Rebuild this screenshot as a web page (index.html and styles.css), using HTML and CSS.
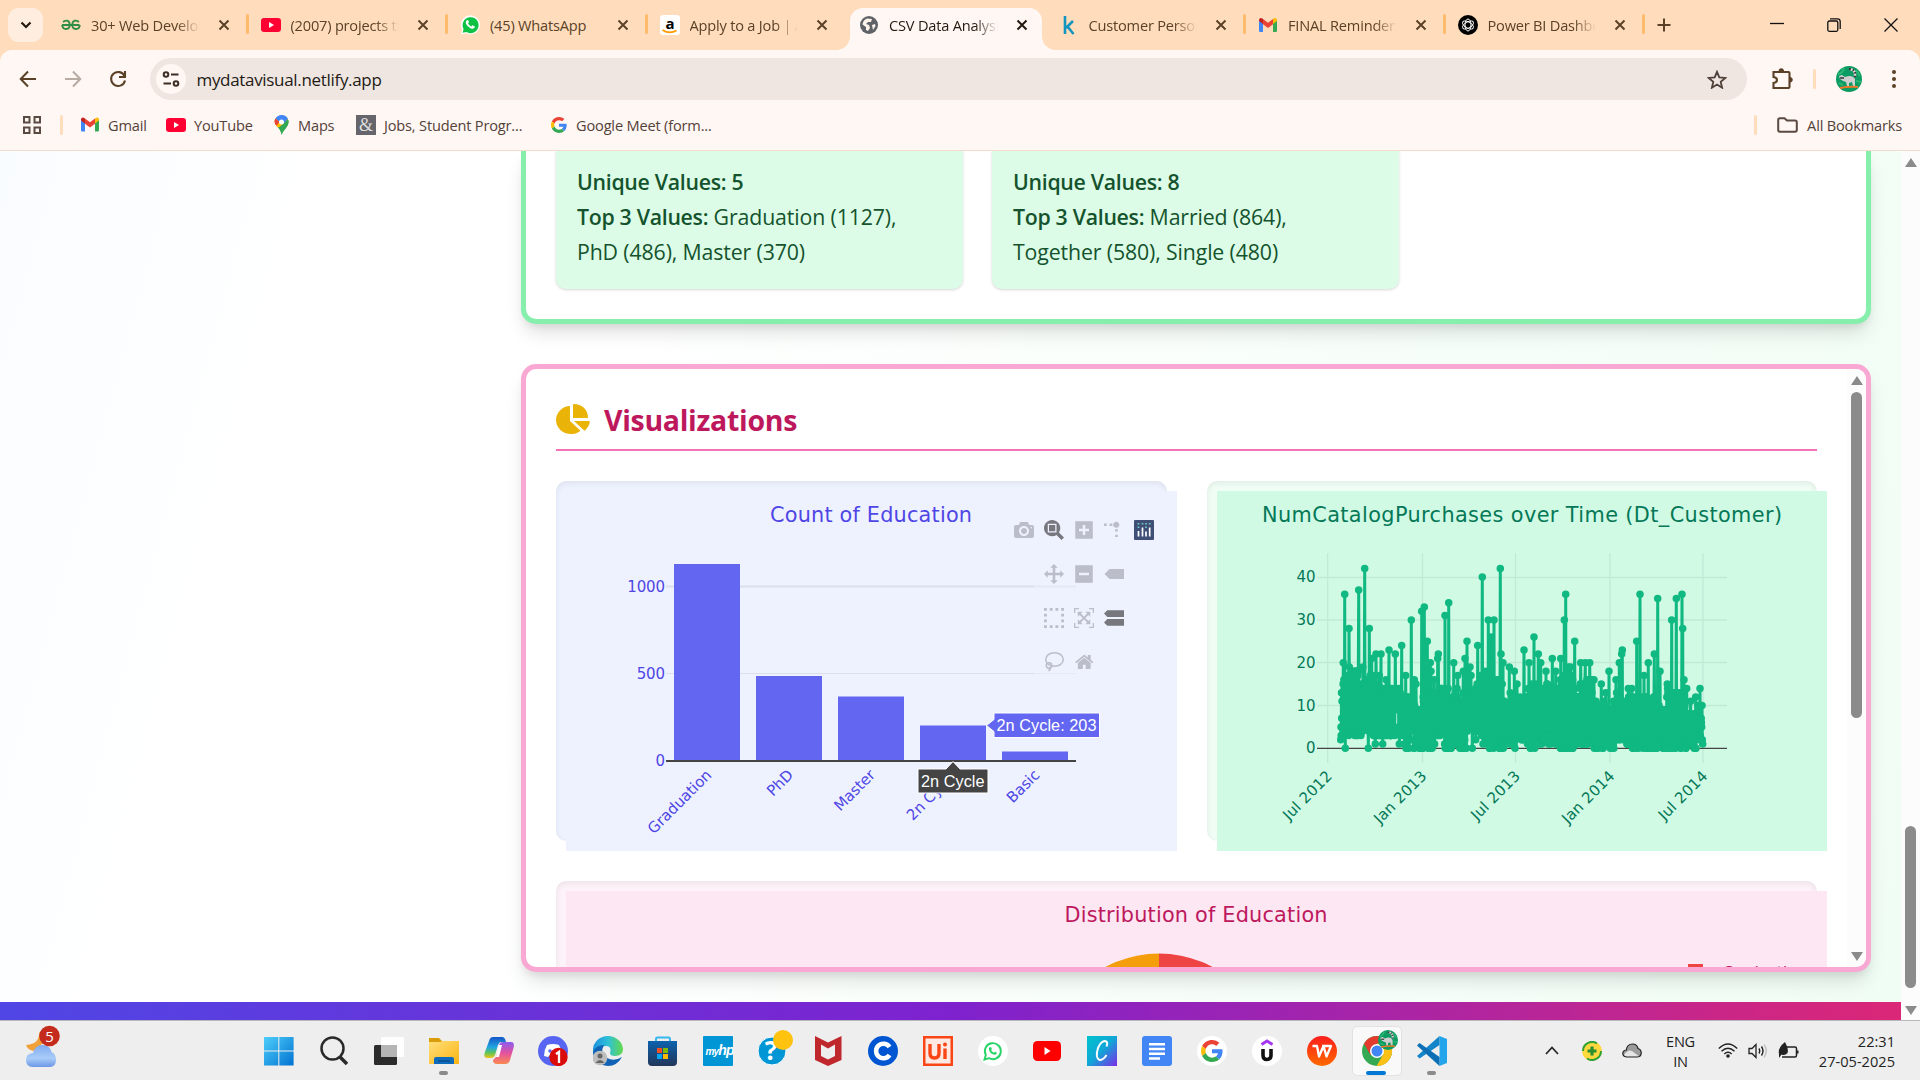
FILE: index.html
```html
<!DOCTYPE html>
<html lang="en">
<head>
<meta charset="utf-8">
<title>CSV Data Analysis</title>
<link rel="stylesheet" href="styles.css">
</head>
<body>
<svg class="defs" width="0" height="0">
  <defs>
    <linearGradient id="winG" x1="0" y1="0" x2="30" y2="30" gradientUnits="userSpaceOnUse"><stop offset="0" stop-color="#4fd0fb"/><stop offset="1" stop-color="#0070d0"/></linearGradient>
    <linearGradient id="edgeG" x1="0" y1="0" x2="1" y2="0"><stop offset="0" stop-color="#1b8fdc"/><stop offset=".5" stop-color="#2fc0d8"/><stop offset="1" stop-color="#62d94a"/></linearGradient>
    <linearGradient id="copA" x1="0" y1="0" x2="0" y2="1"><stop offset="0" stop-color="#1556c8"/><stop offset=".5" stop-color="#22a7e0"/><stop offset=".75" stop-color="#5cc55a"/><stop offset="1" stop-color="#f2c41a"/></linearGradient>
    <linearGradient id="copB" x1="0" y1="0" x2="0" y2="1"><stop offset="0" stop-color="#8a5cf0"/><stop offset=".5" stop-color="#e3529f"/><stop offset="1" stop-color="#fb8a50"/></linearGradient>
    <linearGradient id="canva" x1="0" y1="0" x2="1" y2="1"><stop offset="0" stop-color="#00c4cc"/><stop offset=".5" stop-color="#12a5d8"/><stop offset="1" stop-color="#7d2ae8"/></linearGradient>
    <linearGradient id="store" x1="0" y1="0" x2="0" y2="1"><stop offset="0" stop-color="#0b62ad"/><stop offset="1" stop-color="#233659"/></linearGradient>
    <linearGradient id="folder" x1="0" y1="0" x2="1" y2="1"><stop offset="0" stop-color="#ffe07a"/><stop offset="1" stop-color="#fcb414"/></linearGradient>
    <linearGradient id="wps" x1="0" y1="0" x2="0" y2="1"><stop offset="0" stop-color="#fb1d1d"/><stop offset="1" stop-color="#ff6a00"/></linearGradient>
    <linearGradient id="cloud" x1="0" y1="0" x2="0" y2="1"><stop offset="0" stop-color="#7faaf0"/><stop offset=".6" stop-color="#a9ccf8"/><stop offset="1" stop-color="#6b97e6"/></linearGradient>
    <symbol id="close" viewBox="0 0 12 12"><path d="M1.5 1.5l9 9M10.5 1.5l-9 9" stroke="currentColor" stroke-width="2" fill="none"/></symbol>
    <symbol id="yt" viewBox="0 0 20 20"><rect y="3" width="20" height="14" rx="3.2" fill="#ff0033"/><path d="M8 7l5 3-5 3z" fill="#fff"/></symbol>
    <symbol id="gmail" viewBox="0 0 20 16"><path d="M1 2v12q0 1 1.2 1H5V6.500L1 3z" fill="#4285f4"/><path d="M19 2v12q0 1-1.200 1H15V6.500L19 3z" fill="#34a853"/><path d="M15 2v5l4-3V2.500Q18-.4 15 2z" fill="#fbbc04"/><path d="M5 2v5L1 4V2.500Q2-.4 5 2z" fill="#c5221f"/><path d="M5 2l5 3.800L15 2v5.200L10 11 5 7.200z" fill="#ea4335"/></symbol>
    <symbol id="google" viewBox="0 0 48 48"><path fill="#ea4335" d="M24 9.500c3.540 0 6.710 1.220 9.210 3.600l6.850-6.850C35.900 2.380 30.470 0 24 0 14.620 0 6.510 5.380 2.560 13.220l7.980 6.190C12.430 13.720 17.740 9.500 24 9.500z"/><path fill="#4285f4" d="M46.980 24.550c0-1.570-.15-3.090-.38-4.550H24v9.020h12.940c-.58 2.960-2.260 5.480-4.780 7.180l7.730 6c4.510-4.180 7.090-10.360 7.090-17.650z"/><path fill="#fbbc05" d="M10.530 28.590c-.48-1.450-.76-2.990-.76-4.590s.27-3.140.76-4.590l-7.980-6.190C.92 16.460 0 20.120 0 24c0 3.880.92 7.540 2.560 10.780l7.970-6.190z"/><path fill="#34a853" d="M24 48c6.480 0 11.930-2.130 15.890-5.810l-7.730-6c-2.150 1.450-4.920 2.300-8.160 2.300-6.260 0-11.570-4.220-13.470-9.910l-7.980 6.190C6.510 42.620 14.620 48 24 48z"/></symbol>
    <symbol id="lemur" viewBox="0 0 26 26"><circle cx="13" cy="13" r="13" fill="#0c9b62"/><path d="M2 8q5-1 6-6M20 4l4 6M3 17l4 2M20 15l5 1" stroke="#2bb673" stroke-width="2" fill="none"/><path d="M13 3q7 0 6 8" fill="none" stroke="#ddd" stroke-width="2.500"/><path d="M13 3q7 0 6 8" fill="none" stroke="#333" stroke-width="2.500" stroke-dasharray="1.500 2"/><path d="M3 10l3-1 3 2q7-3 10 2v7h-2l-1-4-3 1v3h-2l-1-4-3-1-3-2z" fill="#cfcfcf"/><path d="M4 12h4" stroke="#333" stroke-width="1.500"/><path d="M4 22q9-2 18-1" stroke="#e8782a" stroke-width="2" fill="none"/></symbol>
  </defs>
</svg>

<header class="browser">
  <div class="tabstrip">
    <div class="tab-search"><svg width="12" height="8" viewBox="0 0 12 8"><path d="M1.500 1.500L6 6l4.500-4.500" fill="none" stroke="#241a10" stroke-width="2.200"/></svg></div>
    <div class="tabs">
      <div class="tab sep"><svg class="fav" viewBox="0 0 20 20"><g fill="none" stroke="#2f8d46" stroke-width="1.900"><path d="M1 10h17.500M2 6.800Q7.500 4 8.500 8q1 6-3.500 6-3.500 0-3.800-4M18 6.800Q12.500 4 11.500 8q-1 6 3.500 6 3.500 0 3.800-4"/></g></svg><span class="label">30+ Web Develop</span><svg class="x"><use href="#close"/></svg></div>
      <div class="tab sep"><svg class="fav"><use href="#yt"/></svg><span class="label">(2007) projects the</span><svg class="x"><use href="#close"/></svg></div>
      <div class="tab sep"><svg class="fav" viewBox="0 0 20 20"><path d="M1 19.500l1.300-4.700A9.500 9.500 0 1 1 6 18.300z" fill="#fff"/><path d="M2.600 17.800l1-3.700A8 8 0 1 1 6.400 17z" fill="#0cc143"/><path d="M6.800 5.300q1-.8 1.500.2l.7 1.600-.9 1.300q1 2 3.200 3l1.200-1.200 2 1q.7.500 0 1.500-1.300 1.700-3.700.7Q7 11.600 5.800 8.500q-.4-2 1-3.200z" fill="#fff"/></svg><span class="label whole">(45) WhatsApp</span><svg class="x"><use href="#close"/></svg></div>
      <div class="tab"><svg class="fav" viewBox="0 0 20 20"><rect width="20" height="20" rx="3" fill="#fff"/><text x="10" y="13.500" text-anchor="middle" class="amz">a</text><path d="M2.500 15q7 4.500 14 .5" fill="none" stroke="#ff9900" stroke-width="1.600"/></svg><span class="label">Apply to a Job | Am</span><svg class="x"><use href="#close"/></svg></div>
      <div class="tab active"><svg class="fav" viewBox="0 0 20 20"><circle cx="10" cy="10" r="9" fill="#5f6368"/><path d="M8 3.500l5 .5-1 3H9L7 9l3 1 1 3-2 3-2-1v-3L3.500 9.500Q4 5 8 3.500zM13 10l3-1 .500 2-2.500 4z" fill="#fff3ec"/></svg><span class="label">CSV Data Analysis</span><svg class="x"><use href="#close"/></svg></div>
      <div class="tab sep"><svg class="fav" viewBox="0 0 20 20"><path d="M6 1v18M7 13l7-7M8.500 11.500l6 7.500" stroke="#1495bd" stroke-width="2.600" fill="none"/></svg><span class="label">Customer Person</span><svg class="x"><use href="#close"/></svg></div>
      <div class="tab sep"><svg class="fav"><use href="#gmail"/></svg><span class="label">FINAL Reminder:</span><svg class="x"><use href="#close"/></svg></div>
      <div class="tab sep"><svg class="fav" viewBox="0 0 20 20"><circle cx="10" cy="10" r="10" fill="#000"/><g fill="none" stroke="#fff" stroke-width="1"><ellipse cx="10" cy="10" rx="3" ry="6"/><ellipse cx="10" cy="10" rx="3" ry="6" transform="rotate(60 10 10)"/><ellipse cx="10" cy="10" rx="3" ry="6" transform="rotate(120 10 10)"/></g></svg><span class="label">Power BI Dashbo</span><svg class="x"><use href="#close"/></svg></div>
    </div>
    <svg class="newtab" width="14" height="14" viewBox="0 0 14 14"><path d="M7 .5v13M.5 7h13" stroke="#5a4127" stroke-width="2"/></svg>
    <div class="winctl">
      <svg width="14" height="14" viewBox="0 0 14 14"><path d="M0 5.500h14" stroke="#111" stroke-width="1.300"/></svg>
      <svg width="14" height="14" viewBox="0 0 14 14"><g fill="none" stroke="#111" stroke-width="1.300"><rect x=".8" y="3" width="10" height="10.300" rx="1.500"/><path d="M3 .8h7.500q2.700 0 2.700 2.700V11"/></g></svg>
      <svg width="14" height="14" viewBox="0 0 14 14"><path d="M.5.5l13 13M13.500.5l-13 13" stroke="#111" stroke-width="1.300"/></svg>
    </div>
  </div>
  <div class="toolbar">
    <svg class="nav" width="18" height="18" viewBox="0 0 18 18"><path d="M17 9H2M9 1.500L1.700 9 9 16.500" fill="none" stroke="#5a4127" stroke-width="2"/></svg>
    <svg class="nav" width="18" height="18" viewBox="0 0 18 18"><path d="M1 9h15M9 1.500L16.300 9 9 16.500" fill="none" stroke="#b8aba3" stroke-width="2"/></svg>
    <svg class="nav" width="18" height="18" viewBox="0 0 18 18"><path d="M15.500 6A7 7 0 1 0 16 10.500M16 1v6h-6" fill="none" stroke="#5a4127" stroke-width="2.100"/></svg>
    <div class="omnibox">
      <span class="site"><svg width="18" height="16" viewBox="0 0 18 16"><g fill="none" stroke="#3d2e25" stroke-width="2"><circle cx="4" cy="3.500" r="2.300"/><path d="M9 3.500h7.500M1.500 12.500H9"/><circle cx="14" cy="12.500" r="2.300"/></g></svg></span>
      <span class="url">mydatavisual.netlify.app</span>
      <svg class="star" width="20" height="19" viewBox="0 0 20 19"><path d="M10 1.800l2.300 5.600 6 .5-4.600 3.900 1.400 5.900L10 14.500l-5.100 3.200 1.400-5.900L1.700 7.900l6-.5z" fill="none" stroke="#4f4039" stroke-width="1.800"/></svg>
    </div>
    <svg class="ext" width="22" height="22" viewBox="0 0 22 22"><path d="M2.500 4h15q1 0 1 1v14q0 1-1 1h-15v-5q3.500-.5 3.500-3t-3.500-3z" fill="none" stroke="#5a4127" stroke-width="2.100"/><path d="M8 3a2.300 2.300 0 0 1 4.600 0zM19 9.500a2.300 2.300 0 0 1 0 4.600z" fill="#5a4127" stroke="#5a4127"/></svg>
    <i class="vsep"></i>
    <svg class="avatar"><use href="#lemur"/></svg>
    <svg width="6" height="20" viewBox="0 0 6 20"><g fill="#5a4127"><circle cx="3" cy="3" r="2"/><circle cx="3" cy="10" r="2"/><circle cx="3" cy="17" r="2"/></g></svg>
  </div>
  <div class="bookmarks">
    <svg class="apps" width="18" height="18" viewBox="0 0 18 18"><g fill="none" stroke="#5b4a42" stroke-width="2"><rect x="1" y="1" width="5.500" height="5.500"/><rect x="11.500" y="1" width="5.500" height="5.500"/><rect x="1" y="11.500" width="5.500" height="5.500"/><rect x="11.500" y="11.500" width="5.500" height="5.500"/></g></svg>
    <i class="vsep"></i>
    <a class="bm b1"><svg class="gm"><use href="#gmail"/></svg>Gmail</a>
    <a class="bm b2"><svg class="ic"><use href="#yt"/></svg>YouTube</a>
    <a class="bm b3"><svg width="15" height="20" viewBox="0 0 15 20"><path d="M7.500 20Q7 15 3 11.500l7-8 4.500 2Q15.500 9 12 13t-4.500 7z" fill="#34a853"/><path d="M3 11.500Q-.5 7 1.500 3.500L6.500 7z" fill="#fbbc04"/><path d="M1.500 3.500L7 8l5-6.500Q14 3 14.500 6L9 12l-5.500.2Q-.5 8 1.500 3.500z" fill="#fbbc04"/><path d="M1.400 3.600Q4-.5 8.500.1q4 .5 5.500 4L9.500 9 5.500 7z" fill="#4285f4"/><path d="M1.400 3.600L5.500 7 2.500 10.800Q-1 7 1.400 3.600z" fill="#ea4335"/><path d="M14 4.200Q15.500 9 11.500 13.500T7.500 20Q7 15 4.500 13z" fill="#34a853"/><circle cx="7.500" cy="7" r="2.500" fill="#fff"/></svg>Maps</a>
    <a class="bm b4"><svg class="ic" viewBox="0 0 20 20"><rect width="20" height="20" fill="#65656b"/><text x="10" y="16" text-anchor="middle" class="amp">&amp;</text></svg>Jobs, Student Progr...</a>
    <a class="bm b5"><svg width="16" height="16"><use href="#google"/></svg>Google Meet (form...</a>
    <span class="right"><i class="vsep"></i><svg width="21" height="16" viewBox="0 0 21 16"><path d="M1.200 13V3q0-1.800 1.800-1.800h4.500L10 3.500h8q1.800 0 1.800 1.800V13q0 1.800-1.800 1.800H3Q1.200 14.800 1.200 13z" fill="none" stroke="#5b4a42" stroke-width="2"/></svg><span>All Bookmarks</span></span>
  </div>
</header>

<main class="viewport">
  <div class="page">
    <div class="content">
      <section class="card green">
        <div class="stat"><b>Unique Values: 5</b><br><b>Top 3 Values:</b> Graduation (1127),<br>PhD (486), Master (370)</div>
        <div class="stat"><b>Unique Values: 8</b><br><b>Top 3 Values:</b> Married (864),<br>Together (580), Single (480)</div>
      </section>
      <section class="card pink">
        <div class="scrollarea">
          <h2><svg width="34" height="30" viewBox="32 0 544 512" preserveAspectRatio="none"><path fill="#eab308" d="M304 240V16.600c0-9 7-16.600 16-16.600C443.700 0 544 100.300 544 224c0 9-7.600 16-16.600 16H304zM32 272C32 150.700 122.100 50.300 239 34.300c9.200-1.300 17 6.100 17 15.400V288L412.500 444.500c6.700 6.700 6.200 17.700-1.500 23.100C371.800 495.600 323.800 512 272 512C139.500 512 32 404.600 32 272zm526.400 16c9.300 0 16.600 7.800 15.400 17c-7.700 55.900-34.600 105.600-73.900 142.300c-6 5.600-15.400 5.200-21.200-.7L320 288H558.400z"/></svg><span>Visualizations</span></h2>
          <div class="grid">
            <div class="box indigo">
              <svg class="plot" width="611" height="360" viewBox="566 491 611 360">
                <rect x="566" y="491" width="611" height="360" fill="#eef2ff"/>
                <path d="M666 586.500h410" stroke="#dcdfeb" stroke-width="2"/>
                <path d="M666 673.500h410" stroke="#dcdfeb" stroke-width="1.200"/>
                <g fill="#6366f1"><rect x="674" y="564" width="66" height="197"/><rect x="756" y="676" width="66" height="85"/><rect x="838" y="696.500" width="66" height="64.500"/><rect x="920" y="725.500" width="66" height="35.500"/><rect x="1002" y="751.500" width="66" height="9.500"/></g>
                <path d="M666 761h410" stroke="#444" stroke-width="2"/>
                <text x="770" y="521.500" class="ttl" textLength="202" fill="#4f46e5">Count of Education</text>
                <g class="tick" fill="#4f46e5" text-anchor="end">
                  <text x="665" y="591.500">1000</text><text x="665" y="679">500</text><text x="665" y="766">0</text>
                  <text transform="translate(712.500 776) rotate(-45)">Graduation</text><text transform="translate(794 776) rotate(-45)">PhD</text><text transform="translate(876 776) rotate(-45)">Master</text><text transform="translate(958 776) rotate(-45)">2n Cycle</text><text transform="translate(1040.500 776) rotate(-45)">Basic</text>
                </g>
                <rect x="1034" y="552" width="124" height="130" fill="#eef2ff" opacity=".5"/>
                <g fill="#bbbdc8">
                  <svg x="1014" y="520" width="20" height="20" viewBox="0 0 1000 1000"><path transform="matrix(1 0 0 -1 0 850)" d="m500 450c-83 0-150-67-150-150 0-83 67-150 150-150 83 0 150 67 150 150 0 83-67 150-150 150z m400 150h-120c-16 0-34 13-39 29l-31 93c-6 15-23 28-40 28h-340c-16 0-34-13-39-28l-31-94c-6-15-23-28-40-28h-120c-55 0-100-45-100-100v-450c0-55 45-100 100-100h800c55 0 100 45 100 100v450c0 55-45 100-100 100z m-400-550c-138 0-250 112-250 250 0 138 112 250 250 250 138 0 250-112 250-250 0-138-112-250-250-250z m365 380c-19 0-35 16-35 35 0 19 16 35 35 35 19 0 35-16 35-35 0-19-16-35-35-35z"/></svg>
                  <svg x="1044" y="520" width="20" height="20" viewBox="0 0 1000 1000" fill="#76787d"><path transform="matrix(1 0 0 -1 0 850)" d="m1000-25l-250 251c40 63 63 138 63 218 0 224-182 406-407 406-224 0-406-182-406-406s183-406 407-406c80 0 155 22 218 62l250-250 125 125z m-812 250l0 438 437 0 0-438-437 0z m62 375l313 0 0-312-313 0 0 312z"/></svg>
                  <svg x="1075" y="520" width="18" height="20" viewBox="0 0 875 1000"><path transform="matrix(1 0 0 -1 0 850)" d="m1 787l0-875 875 0 0 875-875 0z m687-500l-187 0 0-187-125 0 0 187-188 0 0 125 188 0 0 187 125 0 0-187 187 0 0-125z"/></svg>
                  <svg x="1104" y="520" width="20" height="20" viewBox="0 0 1000 1000"><path transform="matrix(1.5 0 0 -1.5 0 850)" d="M512 409c0-57-46-104-103-104-57 0-104 47-104 104 0 57 47 103 104 103 57 0 103-46 103-103z m-327-39l92 0 0 77-92 0z m-185 0l92 0 0 77-92 0z m370-186l92 0 0 77-92 0z m0-184l92 0 0 77-92 0z"/></svg>
                  <svg x="1044" y="564" width="20" height="20" viewBox="0 0 1000 1000"><path transform="matrix(1 0 0 -1 0 850)" d="m1000 350l-187 188 0-125-250 0 0 250 125 0-188 187-187-187 125 0 0-250-250 0 0 125-188-188 186-187 0 125 252 0 0-250-125 0 187-188 188 188-125 0 0 250 250 0 0-126 187 188z"/></svg>
                  <svg x="1075" y="564" width="18" height="20" viewBox="0 0 875 1000"><path transform="matrix(1 0 0 -1 0 850)" d="m0 788l0-876 875 0 0 876-875 0z m688-500l-500 0 0 125 500 0 0-125z"/></svg>
                  <path d="M1104.500 574l5-5h14.500v10h-14.500z"/>
                  <svg x="1044" y="608" width="20" height="20" viewBox="0 0 1000 1000"><path transform="matrix(1 0 0 -1 0 850)" d="m0 850l0-143 143 0 0 143-143 0z m286 0l0-143 143 0 0 143-143 0z m285 0l0-143 143 0 0 143-143 0z m286 0l0-143 143 0 0 143-143 0z m-857-286l0-143 143 0 0 143-143 0z m857 0l0-143 143 0 0 143-143 0z m-857-285l0-143 143 0 0 143-143 0z m857 0l0-143 143 0 0 143-143 0z m-857-286l0-143 143 0 0 143-143 0z m286 0l0-143 143 0 0 143-143 0z m285 0l0-143 143 0 0 143-143 0z m286 0l0-143 143 0 0 143-143 0z"/></svg>
                  <svg x="1074" y="608" width="20" height="20" viewBox="0 0 1000 1000"><path transform="matrix(1 0 0 -1 0 850)" d="m250 850l-187 0-63 0 0-62 0-188 63 0 0 188 187 0 0 62z m688 0l-188 0 0-62 188 0 0-188 62 0 0 188 0 62-62 0z m-875-938l0 188-63 0 0-188 0-62 63 0 187 0 0 62-187 0z m875 188l0-188-188 0 0-62 188 0 62 0 0 62 0 188-62 0z m-125 188l-1 0-93-94-156 156 156 156 92-93 2 0 0 250-250 0 0-2 93-92-156-156-156 156 94 92 0 2-250 0 0-250 0 0 93 93 157-156-157-156-93 94 0 0 0-250 250 0 0 0-94 93 156 157 156-157-93-93 0 0 250 0 0 250z"/></svg>
                  <svg x="1104" y="609" width="20" height="18" viewBox="0 0 1125 1000" fill="#76787d"><path transform="matrix(1 0 0 -1 0 850)" d="m187 786l0 2-187-188 188-187 0 0 937 0 0 373-938 0z m0-499l0 1-187-188 188-188 0 0 937 0 0 376-938-1z"/></svg>
                  <g fill="none" stroke="#bbbdc8" stroke-width="1.500"><ellipse cx="1054.500" cy="659.500" rx="8.800" ry="6.800"/><circle cx="1049" cy="665.500" r="2.700"/><path d="M1050 667q1 2-1.500 4"/></g>
                  <svg x="1075" y="652" width="18.500" height="20" viewBox="0 0 928 1000"><path transform="matrix(1 0 0 -1 0 850)" d="m786 296v-267q0-15-11-26t-25-10h-214v214h-143v-214h-214q-15 0-25 10t-11 26v267q0 1 0 2t0 2l321 264 321-264q1-1 1-4z m124 39l-34-41q-5-5-12-6h-2q-7 0-12 3l-386 322-386-322q-7-4-13-4-7 2-12 7l-35 41q-4 5-3 13t6 12l401 334q18 15 42 15t43-15l136-114v109q0 8 5 13t13 5h107q8 0 13-5t5-13v-227l122-102q5-5 6-12t-4-13z"/></svg>
                </g>
                <rect x="1134" y="520" width="20" height="20" rx="1" fill="#3f4f75"/>
                <path d="M1138.500 531v5.500M1142.500 527.500v9M1146 531.500v5M1149.700 527.500v9" stroke="#fff" stroke-width="1.700"/><path d="M1138.500 523v1.400M1138.500 526.500v1.400M1142.500 523v1.400M1146 523v1.400M1146 526.500v1.400M1149.700 523v1.400" stroke="#6fd0bd" stroke-width="1.700"/>
                <path d="M986.500 725.500l7.500-6v-6.500h105.500v24.500H994v-6z" fill="#6366f1" stroke="#fff"/>
                <text x="996.500" y="731" class="hov" textLength="100">2n Cycle: 203</text>
                <path d="M953 761.500l7 7.500h28v24H918v-24H946z" fill="#444" stroke="#fff"/>
                <text x="921" y="787" class="hov" textLength="63.500">2n Cycle</text>
              </svg>
            </div>
            <div class="box mint">
              <svg class="plot" width="610" height="360" viewBox="1217 491 610 360">
                <rect x="1217" y="491" width="611" height="360" fill="#d1fae5"/>
                <path d="M1317 577.500h410M1317 620h410M1317 662.500h410M1317 705.500h410M1327.700 553v210M1422.500 553v210M1515.500 553v210M1610 553v210M1703 553v210" stroke="#c3e9d7" stroke-width="1.300" fill="none"/>
                <path d="M1317 748.300h410" stroke="#444" stroke-width="1.300"/>
                <g id="series"></g>
                <text x="1262" y="521.500" class="ttl" textLength="520" fill="#047857">NumCatalogPurchases over Time (Dt_Customer)</text>
                <g class="tick" fill="#047857" text-anchor="end">
                  <text x="1315.500" y="582">40</text><text x="1315.500" y="625">30</text><text x="1315.500" y="667.500">20</text><text x="1315.500" y="710.500">10</text><text x="1315.500" y="753">0</text>
                  <g class="dates"><text transform="translate(1333 777) rotate(-45)">Jul 2012</text><text transform="translate(1427.500 777) rotate(-45)">Jan 2013</text><text transform="translate(1521 777) rotate(-45)">Jul 2013</text><text transform="translate(1615.500 777) rotate(-45)">Jan 2014</text><text transform="translate(1708.500 777) rotate(-45)">Jul 2014</text></g>
                </g>
              </svg>
            </div>
            <div class="box rose">
              <svg class="plot" width="1261" height="360" viewBox="566 891 1261 360">
                <rect x="566" y="891" width="1261" height="360" fill="#fce7f3"/>
                <path d="M1159 1066V953.500a113 113 0 0 1 0 226z" fill="#ef4444"/>
                <path d="M1159 1066V953.500a113 113 0 0 0 0 226z" fill="#f59e0b"/>
                <text x="1064.500" y="921.500" class="ttl" textLength="263" fill="#be185d">Distribution of Education</text>
                <rect x="1688" y="964" width="15" height="15" fill="#ef4444"/>
                <text x="1722.500" y="977.500" class="tick" fill="#be185d">Graduation</text>
              </svg>
            </div>
          </div>
        </div>
        <div class="sbar inner"><i class="up"></i><i class="thumb"></i><i class="down"></i></div>
      </section>
    </div>
    <footer></footer>
  </div>
  <div class="sbar outer"><i class="up"></i><i class="thumb"></i><i class="down"></i></div>
</main>

<div class="taskbar">
  <div class="weather"><svg width="34" height="44" viewBox="0 0 34 44"><path d="M13 8Q14 20 0 21q2 6 10 6l10-12z" fill="#f0a13a"/><path d="M6.500 43q-6.500-.5-6.500-7t7-7q2-8 9.500-8t9 7Q30 30 30 36t-5.500 7z" fill="url(#cloud)"/><circle cx="23.500" cy="12" r="10.300" fill="#c42b1c"/><text x="23.500" y="17.500" text-anchor="middle" class="badge">5</text></svg></div>
  <div class="icons">
    <span><svg viewBox="0 0 30 30"><g fill="url(#winG)"><rect x="0" y="1" width="14.300" height="13.500"/><rect x="15.300" y="1" width="14.300" height="13.500"/><rect x="0" y="15.500" width="14.300" height="14"/><rect x="15.300" y="15.500" width="14.300" height="14"/></g></svg></span>
    <span><svg viewBox="0 0 30 30"><circle cx="13.500" cy="12.500" r="11" fill="none" stroke="#2a2a2a" stroke-width="2.500"/><path d="M21 21l7 7" stroke="#2a2a2a" stroke-width="3.500"/></svg></span>
    <span><svg viewBox="0 0 30 30"><rect y="9" width="23" height="20" rx="1.500" fill="#2b2b2b"/><rect x="7" y="1" width="23" height="20" rx="1.500" fill="#fff" opacity=".93"/><path d="M7 9h16v12H7z" fill="#b5b5b5"/></svg></span>
    <span class="run"><svg viewBox="0 0 30 30"><path d="M0 2h10l3 3v6H0z" fill="#d99c0a"/><path d="M0 6h11l2-1h17v23H0z" fill="url(#folder)"/><path d="M5 28v-5q0-2 2-2h16q2 0 2 2v5z" fill="#0f6cbd"/><path d="M9 25h12" stroke="#0a4a8a" stroke-width="1.300"/></svg></span>
    <span><svg viewBox="0 0 30 30"><path d="M9 1h9q3 0 4 5h-5q-2 0-3 3l-3 10q-1 3-4 3H3q-4 0-2-6L5 5q1-4 4-4z" fill="url(#copA)"/><path d="M21 28h-8q-4 0-4-4l3-3 3-12q1-3 4-3h8q4 0 2.500 6L26 24q-1 4-5 4z" fill="url(#copB)"/><path d="M12 21l2.500-12H18l-3 12z" fill="#fff"/></svg></span>
    <span><svg viewBox="0 0 30 30"><circle cx="15" cy="15" r="15" fill="#5865f2"/><path d="M9 9q6-2 12 0 3 5 3 11l-4 1-2-2h-6l-2 2-4-1q0-6 3-11z" fill="#fff"/><circle cx="12" cy="15" r="1.700" fill="#5865f2"/><circle cx="20.500" cy="21" r="9.200" fill="#d90b0b"/><path d="M18 18l3-2v11" fill="none" stroke="#fff" stroke-width="2.300"/></svg></span>
    <span><svg viewBox="0 0 30 30"><path d="M0 15A15 14 0 0 1 30 13q0 7-8 7-5 0-5-3 2-7-4-7-8 0-13 9z" fill="url(#edgeG)"/><path d="M0 16q3-7 11-7-5 9 3 13 7 4 15-1-5 9-14 9Q1 29 0 16z" fill="#1063b4"/><circle cx="7" cy="22" r="7.300" fill="#bdbdbd"/><circle cx="7" cy="20" r="2.500" fill="#666"/><path d="M2.500 27q4.500-6 9 0z" fill="#666"/></svg></span>
    <span><svg viewBox="0 0 30 30"><path d="M8 6V3q0-1.500 1.500-1.500h11Q22 1.500 22 3v3" fill="none" stroke="#35b8f0" stroke-width="2"/><path d="M0 5h29v21q0 4-4 4H4q-4 0-4-4z" fill="url(#store)"/><path d="M9 12h5v5H9z" fill="#f25022"/><path d="M15 12h5v5h-5z" fill="#7fba00"/><path d="M9 18h5v5H9z" fill="#00a4ef"/><path d="M15 18h5v5h-5z" fill="#ffb900"/></svg></span>
    <span><svg viewBox="0 0 30 30"><rect width="30" height="30" rx="1" fill="#0096d6"/><text x="2.500" y="18.500" class="myhp">my<tspan class="hp">hp</tspan></text></svg></span>
    <span><svg viewBox="0 0 30 30" overflow="visible"><circle cx="14" cy="15" r="14" fill="#0096d6" stroke="#fff" stroke-width="1"/><text x="13" y="24" text-anchor="middle" class="q">?</text><circle cx="25" cy="4" r="10" fill="#ffc20e"/></svg></span>
    <span><svg viewBox="0 0 30 30"><path d="M2 0l13 6.500L28.500 0v24L15 30 2 24z" fill="#c0272d"/><path d="M8 8.500l7 4 7-4V20l-7 3.500L8 20z" fill="#eee"/></svg></span>
    <span><svg viewBox="0 0 30 30"><circle cx="15" cy="15" r="15" fill="#0056d2"/><path d="M21.500 11A7.300 7.300 0 1 0 21.500 19" fill="none" stroke="#fff" stroke-width="4.500"/></svg></span>
    <span><svg viewBox="0 0 30 30"><rect width="30" height="30" fill="#fa4616"/><rect x="2.500" y="2.500" width="25" height="25" fill="#ffe9e2"/><path d="M7 8v9q0 5 4.500 5t4.500-5V8M22 12.500V23" fill="none" stroke="#fa4616" stroke-width="3.400"/><circle cx="22" cy="8.500" r="2" fill="#fa4616"/></svg></span>
    <span><svg viewBox="0 0 30 30"><circle cx="15" cy="15" r="15" fill="#fff"/><path d="M6.500 23.500l1.300-4.500a8 8 0 1 1 3.200 3.200z" fill="none" stroke="#25d366" stroke-width="1.900"/><path d="M12 11q1-.5 1.500 1l.4 1-.7 1.200q1 1.800 2.800 2.500l1-1 1.800.8q0 2.300-2.500 2.200-4.500-1-5.500-5.500 0-1.500 1.200-2.200z" fill="#25d366"/></svg></span>
    <span><svg viewBox="0 0 30 30"><rect x="1" y="5" width="28" height="20" rx="4.500" fill="#ff0000"/><path d="M12.500 11l6 4-6 4z" fill="#fff"/></svg></span>
    <span><svg viewBox="0 0 30 30"><rect width="30" height="30" fill="url(#canva)"/><path d="M19.500 10.500q2-5-1.500-5.500-4 0-7 7-3 10 1.500 12 4 0 7-5" fill="none" stroke="#fff" stroke-width="2"/></svg></span>
    <span><svg viewBox="0 0 30 30"><rect width="30" height="30" rx="3" fill="#4285f4"/><path d="M7 8.200h16M7 13h16M7 17.800h16M7 22.500h11" stroke="#fff" stroke-width="2.400"/></svg></span>
    <span><svg viewBox="0 0 30 30"><circle cx="15" cy="15" r="15" fill="#fff"/><svg x="4" y="4" width="22" height="22"><use href="#google"/></svg></svg></span>
    <span><svg viewBox="0 0 30 30"><circle cx="15" cy="15" r="15" fill="#fff"/><path d="M9.500 8.500L15 5l5.500 3.500" fill="none" stroke="#a435f0" stroke-width="2.800"/><path d="M11 13v6q0 4.500 4 4.500t4-4.500v-6" fill="none" stroke="#111" stroke-width="3.600"/></svg></span>
    <span><svg viewBox="0 0 30 30"><circle cx="15" cy="15" r="15" fill="url(#wps)"/><path d="M5.500 10H10l2 10.500L16.500 10l3 10.500L24 10h-9" fill="none" stroke="#fff" stroke-width="2.300" stroke-linejoin="round"/></svg></span>
    <span class="on"><svg viewBox="0 0 30 30" overflow="visible"><circle cx="15" cy="15" r="15" fill="#34a853"/><path d="M2 7.500A15 15 0 0 1 28 7.500H15L8.500 19z" fill="#e33b2e"/><path d="M28 7.500A15 15 0 0 1 14.500 30L21.500 18 15 7.500z" fill="#fbc116"/><circle cx="15" cy="15" r="7" fill="#fff"/><circle cx="15" cy="15" r="5.500" fill="#4285f4"/><svg x="16" y="-6" width="20" height="20" overflow="visible"><use href="#lemur" width="20" height="20"/></svg></svg></span>
    <span class="run"><svg viewBox="0 0 30 30"><path d="M22.500 0L30 3v24l-7.500 3z" fill="#24a4ea"/><path d="M22.500 0L0 20l2.500 2.500L22.500 9z" fill="#1485c9"/><path d="M0 9.500L2.500 7l20 14v9z" fill="#0c6fb5"/></svg></span>
  </div>
  <div class="tray">
    <svg class="t1" width="14" height="9" viewBox="0 0 14 9"><path d="M1 8l6-6.500L13 8" fill="none" stroke="#222" stroke-width="1.700"/></svg>
    <svg class="t2" width="20" height="20" viewBox="0 0 20 20"><circle cx="10" cy="10" r="10" fill="#ffd83d"/><path d="M1 10A9 9 0 0 1 15 2.500M19 10A9 9 0 0 1 5 17.500" fill="none" stroke="#2fa33a" stroke-width="2"/><path d="M10 5.500v9M5.500 10h9" stroke="#2b8f2f" stroke-width="3.200"/></svg>
    <svg class="t3" width="20" height="15" viewBox="0 0 20 15"><path d="M4.500 14Q.8 13.500.8 10.500T4.300 7Q5 1 10.500 1q4.500 0 5.500 4.500 3.200 1 3.200 4.500t-3.500 4z" fill="#9b9b9b" stroke="#222" stroke-width="1.200"/><path d="M2 12q4-6 8-4l7 5.300H4z" fill="#e5e5e5"/></svg>
    <div class="lang">ENG<br>IN</div>
    <svg class="t4" width="20" height="15" viewBox="0 0 20 15"><g fill="none" stroke="#222" stroke-width="1.400"><path d="M.8 5.500q9.200-9 18.400 0M3.500 8.300q6.500-6 13 0M6.300 11q3.700-3.300 7.400 0"/></g><circle cx="10" cy="13" r="1.800" fill="#222"/></svg>
    <svg class="t5" width="20" height="16" viewBox="0 0 20 16"><path d="M1 5.500h3l4-4v13l-4-4H1z" fill="none" stroke="#222" stroke-width="1.300"/><path d="M11 5.500q1.600 2.500 0 5M13.500 3.500q3 4.500 0 9" fill="none" stroke="#222" stroke-width="1.400"/><path d="M16 1.500q4.500 6.500 0 13" fill="none" stroke="#bbb" stroke-width="1.300"/></svg>
    <svg class="t6" width="21" height="17" viewBox="0 0 21 17"><path d="M8 5h9q1.500 0 1.500 1.500v7Q18.500 15 17 15H4" fill="none" stroke="#222" stroke-width="1.500"/><path d="M19.500 8.500v3" stroke="#222" stroke-width="2"/><path d="M1 12Q-.5 6 7 0q4 7 2.500 11-2.500 3-6 1.500L1 16z" fill="#222"/></svg>
    <div class="clock"><span>22:31</span><span>27-05-2025</span></div>
  </div>
</div>
<script src="chart.js"></script>
</body>
</html>
```
FILE: styles.css
```css
* { box-sizing: border-box; }
body { margin: 0; width: 1920px; height: 1080px; overflow: hidden; display: flex; flex-direction: column; font-family: "Open Sans", "Noto Sans", sans-serif; background: #fff; }
svg { display: block; flex: none; }
i { display: block; flex: none; }
.defs { position: absolute; }

/* browser chrome */
.browser { height: 151px; background: #ffddbc; border-bottom: 1px solid #f1dccd; flex: none; }
.tabstrip { height: 50px; display: flex; align-items: center; position: relative; }
.tab-search { width: 35px; height: 34px; margin-left: 8px; border-radius: 11px; background: #ffeee0; display: flex; align-items: center; justify-content: center; }
.tabs { display: flex; margin-left: 5px; height: 50px; }
.tab { width: 199.500px; height: 42px; margin-top: 8px; padding: 0 18px 8px 13px; display: flex; align-items: center; position: relative; color: #5a4127; }
.tab.sep::after { content: ""; position: absolute; right: -1px; top: 6px; width: 3px; height: 20px; border-radius: 2px; background: #ffbb6b; }
.fav { width: 20px; height: 20px; }
.label { flex: 1; margin-left: 10px; margin-right: 17px; font-size: 14.600px; letter-spacing: -0.200px; white-space: nowrap; overflow: hidden; -webkit-mask-image: linear-gradient(to right, #000 78%, transparent 99%); mask-image: linear-gradient(to right, #000 78%, transparent 99%); }
.label.whole { -webkit-mask-image: none; mask-image: none; }
.x { width: 12px; height: 12px; }
.tab.active { color: #241a10; z-index: 0; }
.tab.active::before { content: ""; position: absolute; z-index: -1; left: 4px; right: 4px; top: 0; bottom: 0; background: #fff7f3; border-radius: 13px 13px 0 0; }
.tab.active::after { content: ""; position: absolute; z-index: -1; left: -9px; right: -9px; bottom: 0; height: 13px; background: radial-gradient(circle at 0 0, transparent 12.500px, #fff7f3 13px) left / 13px 13px no-repeat, radial-gradient(circle at 100% 0, transparent 12.500px, #fff7f3 13px) right / 13px 13px no-repeat; }
.newtab { margin-left: 13px; }
.winctl { margin-left: auto; margin-right: 22px; display: flex; gap: 43px; }
.toolbar { height: 56px; background: #fff7f3; border-radius: 12px 12px 0 0; display: flex; align-items: center; padding: 1px 24px 0 19px; }
.nav { margin-right: 27px; }
.omnibox { width: 1597px; height: 42px; margin-top: 1px; border-radius: 21px; background: #efe6e2; display: flex; align-items: center; padding: 0 20px 0 6px; margin-left: -4px; flex: none; }
.site { width: 30px; height: 30px; border-radius: 50%; background: #fff7f3; display: flex; align-items: center; justify-content: center; }
.url { margin-left: 10.500px; font-size: 17px; letter-spacing: -0.320px; color: #241a14; flex: 1; }
.ext { margin-left: 24px; }
.vsep { width: 3px; height: 20px; border-radius: 2px; background: #ffddbc; }
.toolbar .vsep { margin-left: 20px; }
.avatar { width: 26px; height: 26px; margin: 0 29px 0 20px; }
.bookmarks { height: 44px; background: #fff7f3; display: flex; align-items: center; padding: 0 18px 7px 23px; font-size: 14.600px; letter-spacing: -0.180px; color: #544139; }
.bookmarks .vsep { margin-left: 19px; }
.bm { display: flex; align-items: center; white-space: nowrap; gap: 8px; }
.gm { width: 20px; height: 17px; }
.ic { width: 20px; height: 20px; }
.b1 { margin-left: 17px; width: 86px; }
.b2 { width: 108px; }
.b3 { width: 82px; gap: 9px; }
.b4 { width: 195px; }
.b5 { gap: 9px; }
.right { margin-left: auto; display: flex; align-items: center; }
.right .vsep { margin: 0 20px 0 0; }
.right svg { margin-right: 9px; }

/* page */
.viewport { height: 869px; display: flex; flex: none; }
.page { width: 1901px; height: 869px; display: flex; flex-direction: column; background: linear-gradient(105deg, #f9fcff 0%, #fff 16%, #fff 28%, #f0fdf4 100%); overflow: hidden; }
.content { height: 851px; padding: 0 30px 0 521px; flex: none; }
footer { height: 18px; background: linear-gradient(to right, #4f46e5, #7e22ce 50%, #db2777); flex: none; }
.card { background: #fff; box-shadow: 0 12px 19px -4px rgba(0,0,0,.13), 0 5px 8px -3px rgba(0,0,0,.08); overflow: hidden; }
.green { height: 173px; border: 5px solid #86efac; border-top: 0; border-radius: 0 0 15px 15px; padding: 0 30px 30px; display: flex; gap: 29px; }
.stat { width: 407px; height: 138px; padding: 13px 21px; background: #dcfce7; border-radius: 0 0 10px 10px; color: #14532d; font-size: 21.300px; line-height: 35px; letter-spacing: -0.130px; white-space: nowrap; box-shadow: 0 1px 3px rgba(0,0,0,.16); }
.stat b { font-weight: 600; letter-spacing: -0.300px; }
.pink { margin-top: 40px; height: 608px; border: 5px solid #f9a8d4; border-radius: 15px; display: flex; }
.scrollarea { width: 1321px; height: 598px; padding: 30px; overflow: hidden; flex: none; }
h2 { margin: 0; height: 52px; border-bottom: 2px solid #f472b6; display: flex; gap: 14px; padding-top: 5px; color: #be185d; font-size: 28.500px; line-height: 32px; font-weight: 700; letter-spacing: -0.320px; }
.grid { margin-top: 30px; display: grid; grid-template-columns: 1fr 1fr; gap: 40px; }
.box { height: 360px; border-radius: 10px; padding: 10px; min-width: 0; box-shadow: inset 0 2px 6px rgba(0,0,0,.07); }
.indigo { background: #eef2ff; }
.mint { background: #f0fdf4; }
.rose { background: #fdf2f8; grid-column: 1 / 3; }
.ttl { font: 20.800px "DejaVu Sans", sans-serif; }
.tick { font: 15px "DejaVu Sans", sans-serif; letter-spacing: -0.100px; }
.dates { letter-spacing: 0.150px; }
.hov { font: 16.250px "Liberation Sans", sans-serif; fill: #fff; }
.amz { font: 700 15px "Open Sans", sans-serif; }
.amp { font: 18px "Liberation Serif", serif; fill: #ddd; }

/* scrollbars */
.sbar { width: 19px; background: #fcfcfc; display: flex; flex-direction: column; align-items: center; flex: none; }
.sbar .thumb { width: 11px; border-radius: 6px; background: #8b8b8b; }
.up, .down { width: 0; height: 0; border: 6.500px solid transparent; }
.up { border-top: 0; border-bottom: 9px solid #8b8b8b; }
.down { border-bottom: 0; border-top: 9px solid #8b8b8b; margin-top: auto; }
.inner { padding: 7px 0 6px; }
.inner .thumb { margin-top: 7px; height: 326px; }
.outer { padding: 7px 0 5px; }
.outer .thumb { margin-top: 659px; height: 162px; }

/* taskbar */
.taskbar { height: 60px; background: #eee; border-top: 1px solid #b9b9bd; display: flex; position: relative; flex: none; color: #1f1f1f; }
.weather { width: 251.500px; padding: 3px 0 0 26px; flex: none; }
.badge { font: 15px "Open Sans", sans-serif; fill: #fff; }
.icons { display: flex; flex: none; }
.icons span { width: 54.900px; height: 59px; display: flex; align-items: center; justify-content: center; position: relative; }
.icons svg svg { display: inline; }
.icons span > svg { width: 30px; height: 30px; position: relative; }
.run::after { content: ""; position: absolute; bottom: 5px; left: 23px; width: 9px; height: 4px; border-radius: 2px; background: #8a8a8a; }
.on::before { content: ""; position: absolute; left: 3px; top: 5px; width: 48px; height: 48px; border-radius: 5px; background: #f9f9f9; border: 1px solid #e2e2e2; }
.on::after { content: ""; position: absolute; bottom: 5px; left: 17px; width: 20px; height: 4px; border-radius: 2px; background: #0078d4; }
.myhp { font: italic 700 10px "Liberation Sans", sans-serif; fill: #fff; letter-spacing: -0.800px; }
.hp { font-size: 14px; }
.q { font: 700 26px "Open Sans", sans-serif; fill: #fff; }
.tray { margin-left: auto; margin-right: 25px; display: flex; align-items: center; font-size: 14.600px; line-height: 20px; letter-spacing: -0.300px; flex: none; }
.t1 { margin-right: 23px; }
.t2 { margin-right: 20px; }
.t3 { margin-right: 24px; }
.lang { width: 29px; text-align: center; margin-right: 23px; }
.t4, .t5 { margin-right: 10px; }
.t6 { margin-right: 12px; }
.clock { width: 84px; white-space: nowrap; display: flex; flex-direction: column; align-items: flex-end; letter-spacing: 0; }
```
FILE: chart.js
```js
// Daily catalogue purchases: notable days as [x, value], quieter days drawn from a local band.
const peaks = [[62,2],[65,7],[66,11],[70,20],[74,36],[76,0],[87,28],[116,37],[134,42],[145,0],[148,28],[155,21],[166,1],[168,22],[183,22],[188,1],[207,23],[226,22],[238,1],[245,24],[257,17],[274,30],[283,16],[288,15],[305,32],[313,33],[322,25],[331,20],[333,18],[343,16],[353,21],[355,22],[375,31],[382,1],[386,34],[401,20],[413,17],[430,18],[435,21],[441,25],[450,19],[453,17],[457,0],[467,2],[473,24],[487,40],[489,1],[496,18],[505,30],[514,26],[522,30],[529,16],[541,42],[543,22],[549,20],[568,19],[583,18],[585,0],[591,15],[600,12],[612,23],[627,20],[642,26],[655,22],[662,20],[678,18],[697,21],[707,18],[722,21],[733,30],[737,36],[745,19],[752,19],[764,25],[782,20],[796,20],[809,20],[822,16],[828,11],[844,15],[857,13],[867,18],[888,16],[898,20],[905,22],[907,23],[925,14],[935,14],[950,25],[960,36],[972,17],[985,20],[1003,22],[1013,35],[1020,18],[1042,15],[1055,30],[1069,35],[1086,36],[1088,28],[1092,16],[1100,14],[1112,11],[1127,12],[1140,14],[1146,10],[1148,1]];
// [until x, low, high]
const bands = [[80,3,16],[130,3,19],[155,4,17],[200,3,17],[250,3,14],[300,0,12],[345,0,15],[372,3,14],[440,0,14],[480,4,16],[500,3,17],[550,0,16],[590,1,13],[620,2,12],[650,0,15],[720,1,15],[760,0,18],[780,1,16],[818,1,17],[885,0,11],[920,2,13],[1010,0,12],[1040,0,10],[1095,0,14],[1130,0,9],[1149,1,10]];
let seed = 7;
const rnd = () => (seed = (seed * 16807) % 2147483647) / 2147483647;
const pts = [];
const step = 0.85;
for (let i = 1; i < peaks.length; i++) {
  const [a, va] = peaks[i - 1], b = peaks[i][0];
  pts.push([a, va]);
  for (let x = a + step; x < b - step / 2; x += step) {
    const [, lo, hi] = bands.find(r => x <= r[0]);
    const r = rnd();
    const v = r < 0.45 ? lo + rnd() * 2 : r > 0.6 ? hi - rnd() * 5 : lo + rnd() * (hi - lo);
    pts.push([x, Math.round(v)]);
  }
}
pts.push(peaks[peaks.length - 1]);
const xy = pts.map(([x, v]) => [(1320 + x / 3).toFixed(1), (748.3 - v * 4.28).toFixed(1)]);
document.getElementById("series").innerHTML =
  '<path fill="none" stroke="#10b981" stroke-width="3" stroke-linejoin="round" d="M' + xy.map(p => p.join(" ")).join("L") + '"/>' +
  '<g fill="#10b981">' + xy.map(p => '<circle r="3.75" cx="' + p[0] + '" cy="' + p[1] + '"/>').join("") + "</g>";
```
